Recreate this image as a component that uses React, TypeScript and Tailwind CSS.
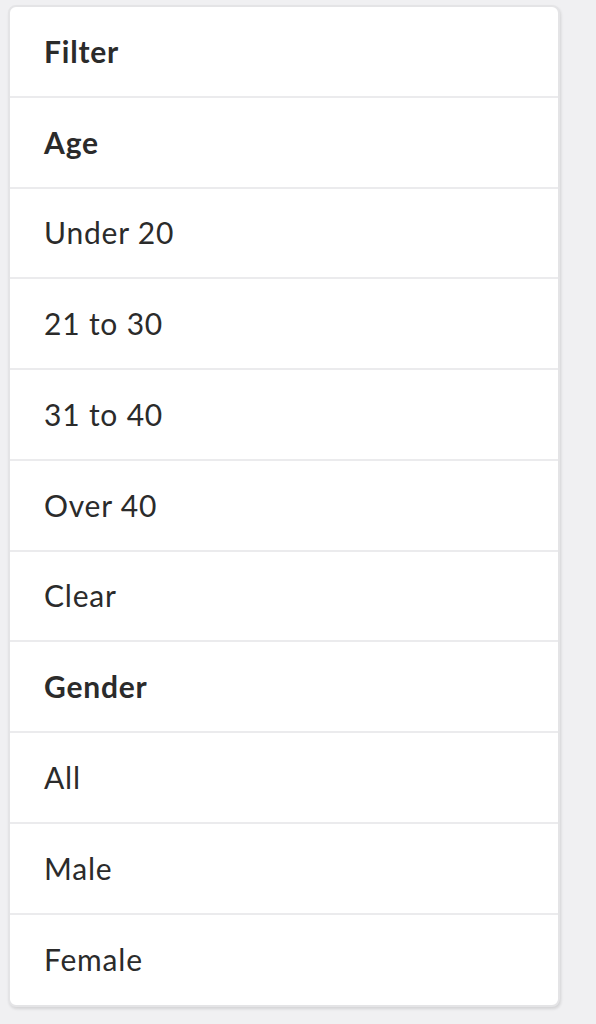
const rows: { label: string; bold?: boolean }[] = [
  { label: 'Filter', bold: true },
  { label: 'Age', bold: true },
  { label: 'Under 20' },
  { label: '21 to 30' },
  { label: '31 to 40' },
  { label: 'Over 40' },
  { label: 'Clear' },
  { label: 'Gender', bold: true },
  { label: 'All' },
  { label: 'Male' },
  { label: 'Female' },
];

export default function App() {
  return (
    <div
      className="min-h-screen bg-[#f0f0f2] pt-[5px] pl-[8px]"
      style={{ fontFamily: 'Lato, "Open Sans", sans-serif' }}
    >
      <div className="w-[552px] overflow-hidden rounded-[8px] border-2 border-[#e4e4e6] bg-white shadow-[1px_2px_3px_rgba(0,0,0,0.12)]">
        {rows.map((row, i) => (
          <div
            key={row.label}
            className={`flex h-[90.75px] items-center pl-[34px] text-[30px] tracking-[0.8px] text-[#2b2b2b] ${
              i < rows.length - 1 ? 'border-b-2 border-[#ebebed]' : ''
            } ${row.bold ? 'font-bold' : 'font-normal'}`}
          >
            {row.label}
          </div>
        ))}
      </div>
    </div>
  );
}
